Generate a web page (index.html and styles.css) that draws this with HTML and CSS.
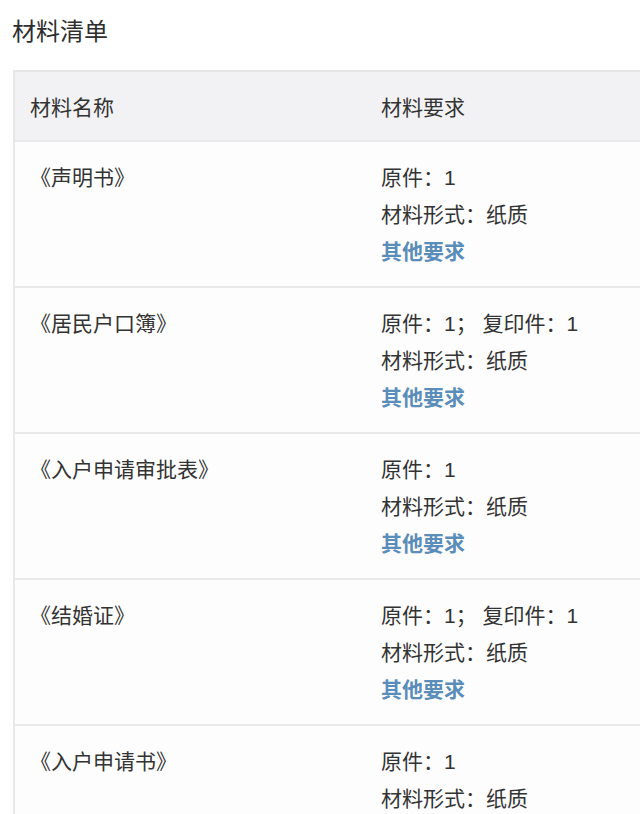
FILE: index.html
```html
<!DOCTYPE html>
<html lang="zh-CN">
<head>
<meta charset="utf-8">
<link rel="stylesheet" href="styles.css">
</head>
<body>
<div class="page">
  <h1 class="title">材料清单</h1>
  <div class="table">
    <div class="row head">
      <div class="c1">材料名称</div>
      <div class="c2">材料要求</div>
    </div>
    <div class="row">
      <div class="c1">《声明书》</div>
      <div class="c2"><p>原件：1</p><p>材料形式：纸质</p><p class="link">其他要求</p></div>
    </div>
    <div class="row">
      <div class="c1">《居民户口簿》</div>
      <div class="c2"><p>原件：1；&nbsp;复印件：1</p><p>材料形式：纸质</p><p class="link">其他要求</p></div>
    </div>
    <div class="row">
      <div class="c1">《入户申请审批表》</div>
      <div class="c2"><p>原件：1</p><p>材料形式：纸质</p><p class="link">其他要求</p></div>
    </div>
    <div class="row">
      <div class="c1">《结婚证》</div>
      <div class="c2"><p>原件：1；&nbsp;复印件：1</p><p>材料形式：纸质</p><p class="link">其他要求</p></div>
    </div>
    <div class="row">
      <div class="c1">《入户申请书》</div>
      <div class="c2"><p>原件：1</p><p>材料形式：纸质</p><p class="link">其他要求</p></div>
    </div>
  </div>
</div>
</body>
</html>
```
FILE: styles.css
```css
html, body {
  margin: 0;
  padding: 0;
  background: #ffffff;
  overflow: hidden;
}
body {
  font-family: "Liberation Sans", "Noto Sans CJK SC", sans-serif;
  color: #333333;
  width: 640px;
  height: 814px;
}
.page {
  padding: 0 0 0 13px;
}
.title {
  margin: 0 0 0 -1px;
  padding: 16px 0 0 0;
  height: 70px;
  box-sizing: border-box;
  font-size: 24px;
  line-height: 32px;
  font-weight: normal;
  color: #2e2e2e;
}
.table {
  width: 700px;
  border-left: 2px solid #e8e8ea;
  border-top: 2px solid #e6e6e8;
}
.row {
  display: flex;
  border-bottom: 2px solid #e9e9eb;
  font-size: 21px;
  background: #fdfdfd;
}
.row.head {
  background: #f2f2f4;
  height: 68px;
  align-items: center;
}
.row:not(.head) {
  height: 144px;
}
.c1 {
  width: 349px;
  padding-left: 15px;
  box-sizing: border-box;
}
.row:not(.head) .c1,
.row:not(.head) .c2 {
  padding-top: 17px;
  line-height: 37px;
}
.c2 {
  flex: 1;
  padding-left: 17px;
}
p {
  margin: 0;
}
.link {
  color: #5a8db9;
  font-weight: bold;
}
```
